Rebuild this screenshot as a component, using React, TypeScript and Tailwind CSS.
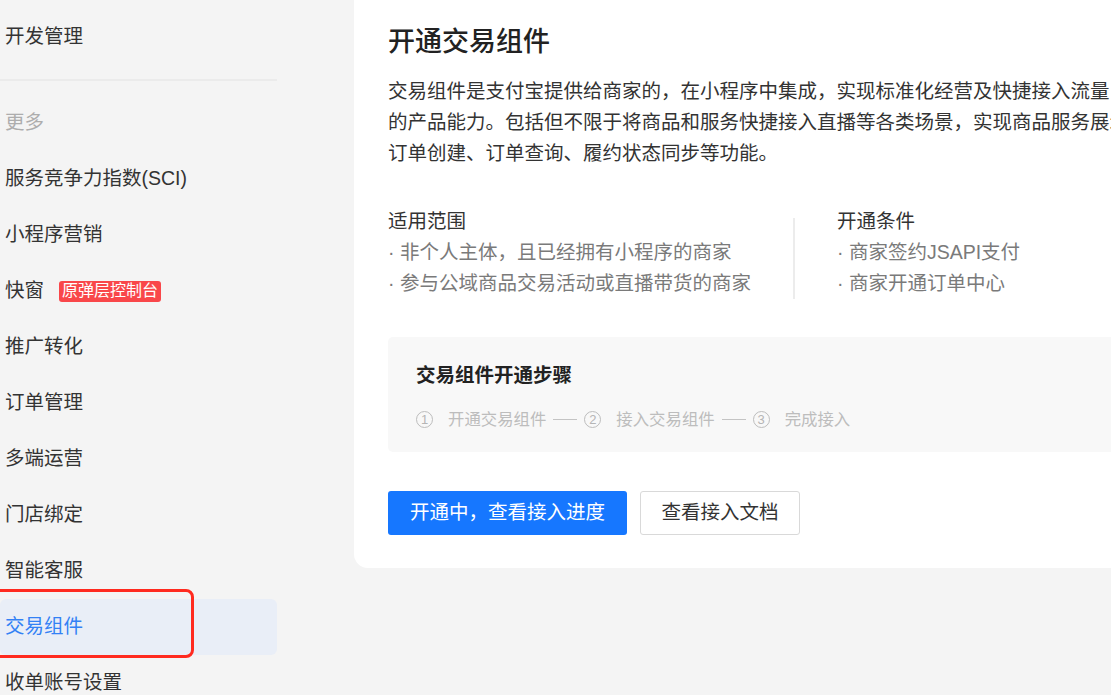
const font = "font-['Liberation_Sans','Noto_Sans_CJK_SC',sans-serif]";

interface NavItem {
  label: string;
  badge?: string;
  active?: boolean;
}

const navItems: NavItem[] = [
  { label: '服务竞争力指数(SCI)' },
  { label: '小程序营销' },
  { label: '快窗', badge: '原弹层控制台' },
  { label: '推广转化' },
  { label: '订单管理' },
  { label: '多端运营' },
  { label: '门店绑定' },
  { label: '智能客服' },
  { label: '交易组件', active: true },
  { label: '收单账号设置' },
];

const steps = ['开通交易组件', '接入交易组件', '完成接入'];

function StepCircle({ n }: { n: number }) {
  return (
    <span className="w-[17px] h-[17px] rounded-full border border-[#bdbdbd] flex items-center justify-center text-[13px] leading-none text-[#b5b5b5]">
      {n}
    </span>
  );
}

export default function App() {
  return (
    <div className={`w-[1111px] h-[695px] overflow-hidden bg-[#f4f4f4] flex items-start ${font}`}>
      {/* 侧边栏 */}
      <aside className="w-[277px] shrink-0 pt-[9px] flex flex-col text-[19.5px] text-[#333]">
        <div className="h-14 shrink-0 flex items-center pl-[5px]">开发管理</div>
        <div className="mt-[14px] mb-[14px] h-[2px] shrink-0 bg-[#ebebeb]" />
        <div className="h-14 shrink-0 flex items-center pl-[5px] text-[#adadad]">更多</div>
        {navItems.map((item) => (
          <div
            key={item.label}
            className={`relative h-14 shrink-0 flex items-center pl-[5px] rounded-md ${
              item.active ? 'bg-[#e9eef7] text-[#3381f5]' : ''
            }`}
          >
            <span>{item.label}</span>
            {item.badge && (
              <span className="ml-[15px] h-[21px] px-[3px] flex items-center rounded-[3px] bg-[#f9474a] text-white text-[16px]">
                {item.badge}
              </span>
            )}
            {item.active && (
              <div className="absolute left-[-10px] top-[-10px] w-[204px] h-[69px] border-[3px] border-[#ff2a1f] rounded-[8px]" />
            )}
          </div>
        ))}
      </aside>

      {/* 主卡片 */}
      <main className="ml-[77px] w-[820px] shrink-0 bg-white rounded-bl-[14px] pl-[34px] pt-[24px] pb-[33px]">
        <h1 className="text-[27px] leading-[36px] font-medium text-[#222]">开通交易组件</h1>
        <p className="mt-4 text-[19.5px] leading-[31px] text-[#333] w-[770px]">
          交易组件是支付宝提供给商家的，在小程序中集成，实现标准化经营及快捷接入流量
          <br />
          的产品能力。包括但不限于将商品和服务快捷接入直播等各类场景，实现商品服务展示、订单创建、订单查询、履约状态同步等功能。
        </p>

        <div className="mt-[37px] flex text-[19.5px] leading-[31px]">
          <div className="w-[405px]">
            <div className="text-[#333]">适用范围</div>
            <div className="text-[#7a7a7a]">· 非个人主体，且已经拥有小程序的商家</div>
            <div className="text-[#7a7a7a]">· 参与公域商品交易活动或直播带货的商家</div>
          </div>
          <div className="w-[2px] mt-[12px] bg-[#ececec]" />
          <div className="pl-[42px]">
            <div className="text-[#333]">开通条件</div>
            <div className="text-[#7a7a7a]">· 商家签约JSAPI支付</div>
            <div className="text-[#7a7a7a]">· 商家开通订单中心</div>
          </div>
        </div>

        <div className="mt-[38px] mr-[-20px] bg-[#f8f8f8] rounded-[5px] pl-[28px] pt-[24px] pb-[21px]">
          <div className="text-[19.5px] leading-[28px] font-bold text-[#222]">交易组件开通步骤</div>
          <div className="mt-[18px] h-[24px] flex items-center text-[16.4px] text-[#bdbdbd]">
            {steps.map((s, i) => (
              <div key={s} className="flex items-center">
                {i > 0 && <span className="mx-[7px] w-[24px] h-px bg-[#c4c4c4]" />}
                <StepCircle n={i + 1} />
                <span className="ml-[15px]">{s}</span>
              </div>
            ))}
          </div>
        </div>

        <div className="mt-[39px] flex gap-[13px]">
          <button className="w-[239px] h-[44px] rounded-[3px] bg-[#1677ff] text-white text-[19.5px]">
            开通中，查看接入进度
          </button>
          <button className="w-[160px] h-[44px] rounded-[3px] bg-white border border-[#d9d9d9] text-[#333] text-[19.5px]">
            查看接入文档
          </button>
        </div>
      </main>
    </div>
  );
}
